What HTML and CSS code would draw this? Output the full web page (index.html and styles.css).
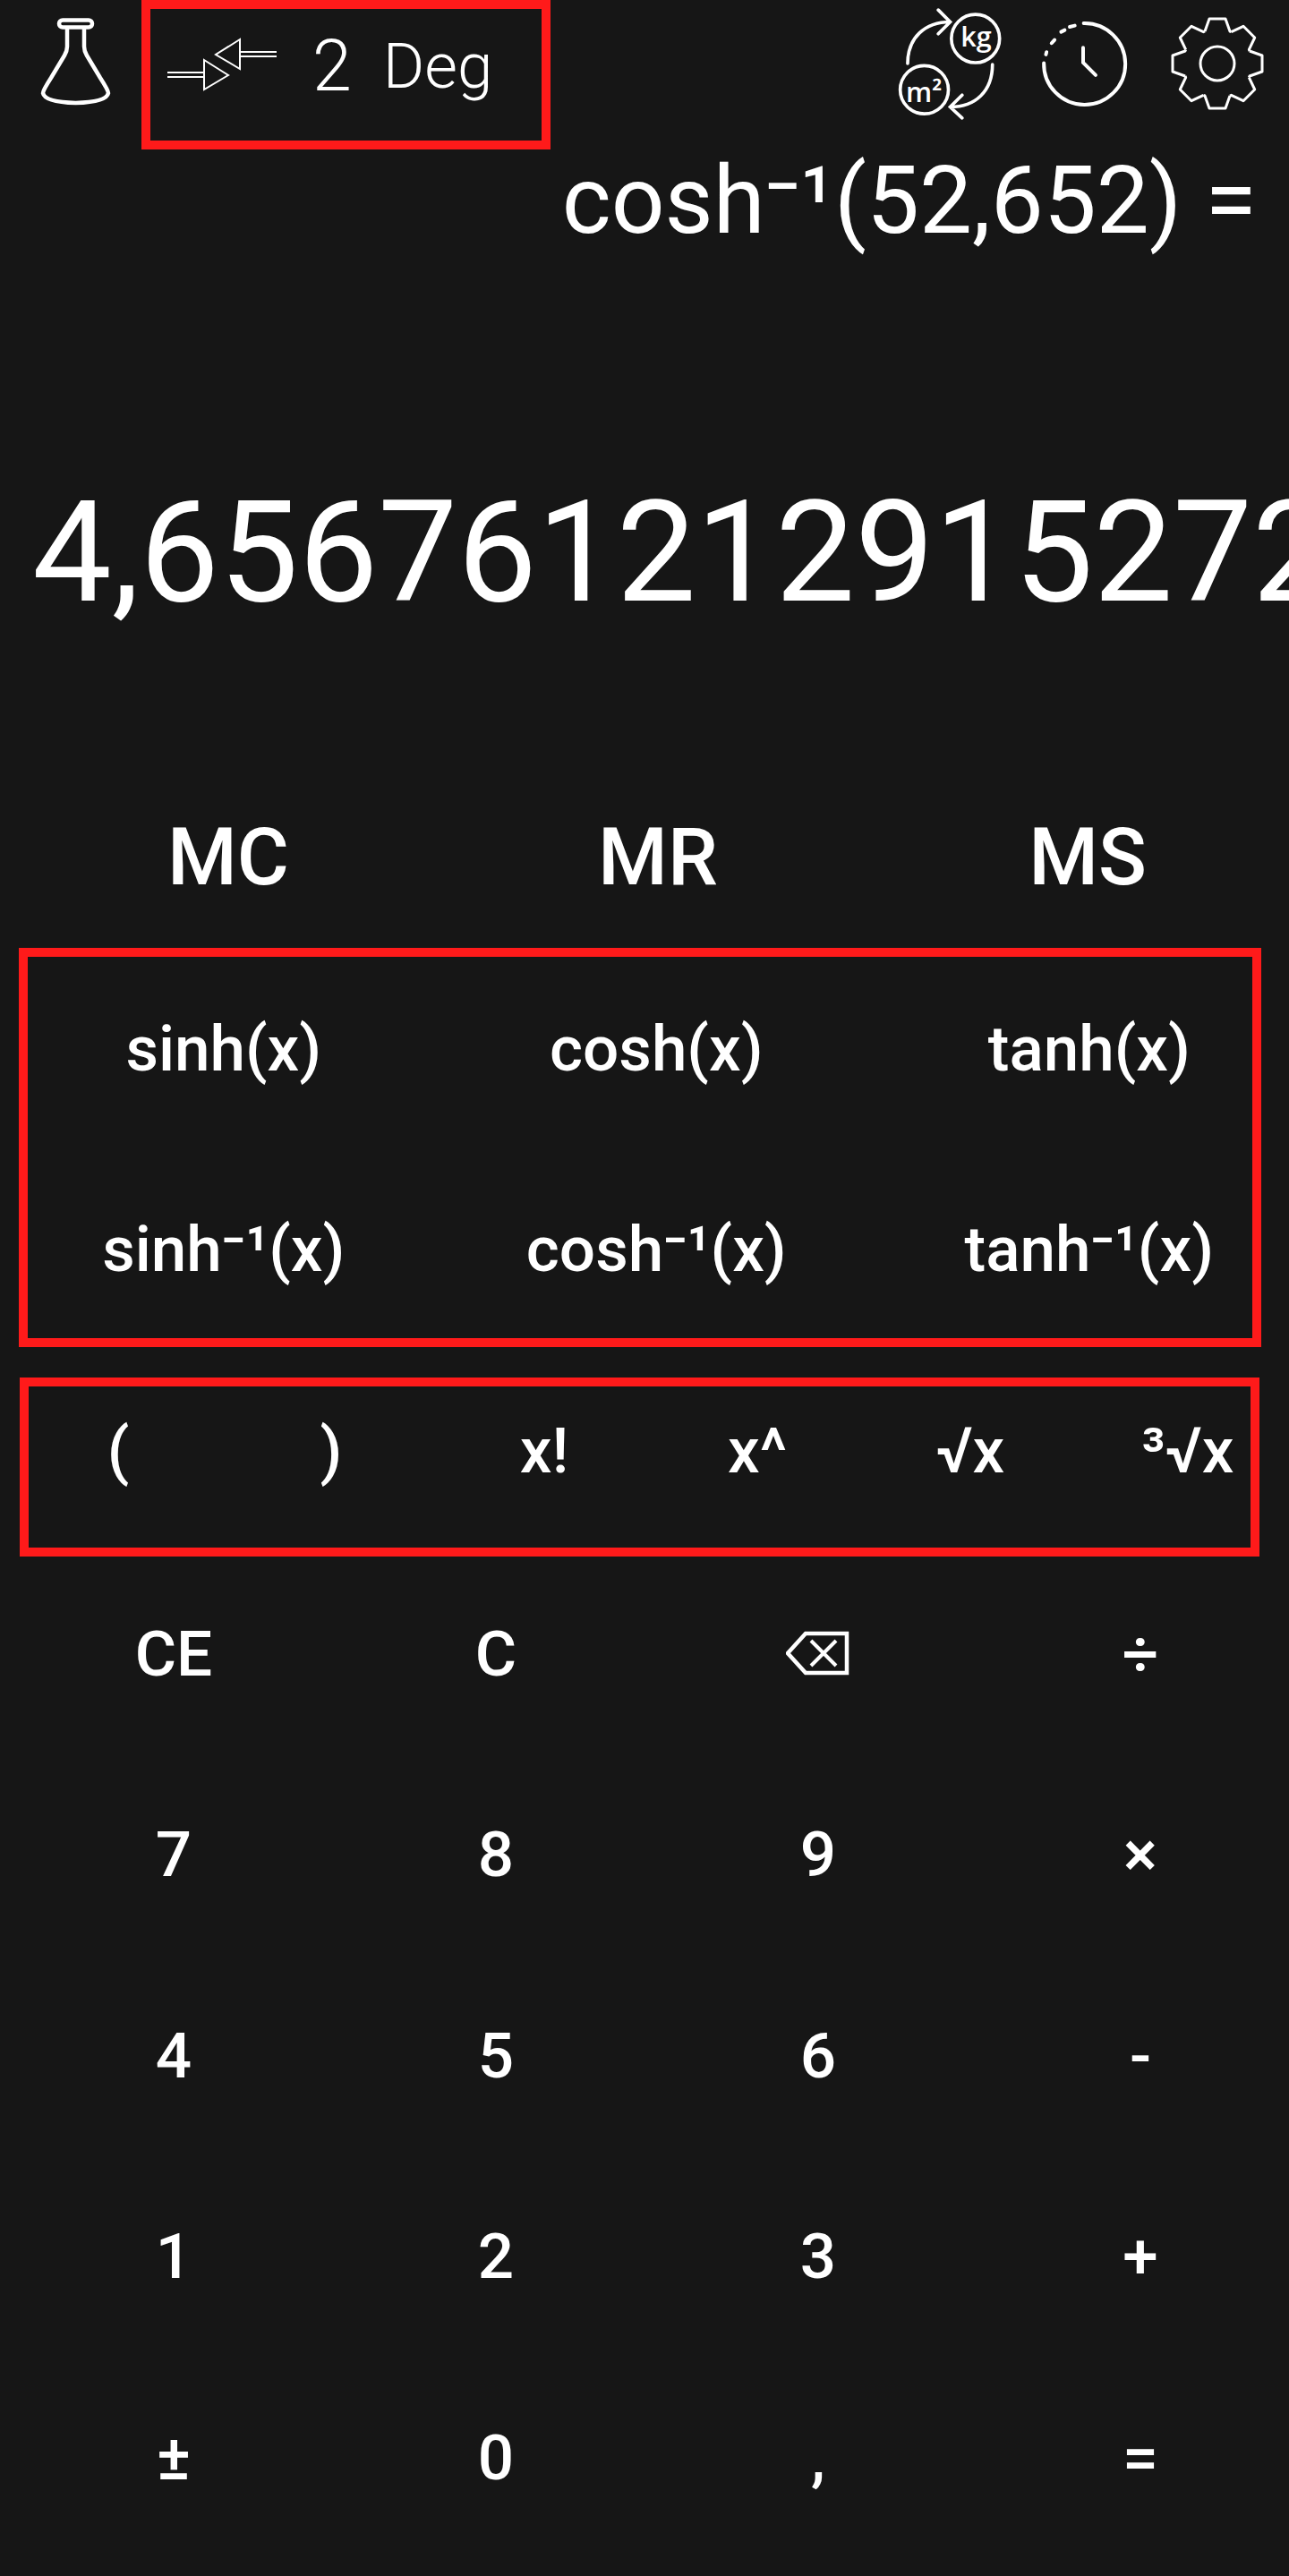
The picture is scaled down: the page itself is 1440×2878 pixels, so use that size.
FILE: index.html
```html
<!DOCTYPE html>
<html lang="en">
<head>
<meta charset="utf-8">
<title>Calculator</title>
<link rel="stylesheet" href="styles.css">
</head>
<body>
<main class="screen">
  <header class="topbar">
    <svg class="icon flask" viewBox="0 0 80 100"><rect x="21" y="3.5" width="37" height="8" rx="4"/><path d="M30 13V33Q30 38 27 43L12 68Q3 82 3 85Q5 95 39.5 96Q74 95 76 85Q76 82 67 68L52 43Q49 38 49 33V13"/></svg>
    <svg class="icon arrows" viewBox="0 0 126 60"><path d="M2 39H43M2 44H43M43 25L70 42L43 58ZM83 2L56 19L83 35ZM83 16H124M83 21H124"/></svg>
    <div class="mode"><span class="digits">2</span><span>Deg</span></div>
    <div class="tools">
      <svg class="icon convert" viewBox="120 20 370 390">
        <circle cx="390" cy="128" r="81"/><circle cx="218" cy="300" r="81"/>
        <path d="M162 212C162 125 220 72 305 72M265 32L305 72L265 112M447 215C447 305 390 358 305 358M345 318L305 358L345 395"/>
        <text x="392" y="155" class="unit" text-anchor="middle">kg</text>
        <text x="217" y="342" class="unit" text-anchor="middle">m²</text>
      </svg>
      <svg class="icon clock" viewBox="600 60 300 310">
        <path d="M752 78A137 137 0 1 1 618 212"/>
        <path d="M625 183L627 175M644 145L654 134M676 107L688 101M705 90L722 86"/>
        <path d="M750 160V210L792 252"/>
      </svg>
      <svg class="icon gear" viewBox="-165 -165 330 330">
        <defs><path id="tooth" d="M-42-108L-27-150H27L42-108L47-106"/></defs>
        <use href="#tooth"/><use href="#tooth" transform="rotate(45)"/><use href="#tooth" transform="rotate(90)"/><use href="#tooth" transform="rotate(135)"/><use href="#tooth" transform="rotate(180)"/><use href="#tooth" transform="rotate(225)"/><use href="#tooth" transform="rotate(270)"/><use href="#tooth" transform="rotate(315)"/>
        <circle r="57"/>
      </svg>
    </div>
  </header>

  <div class="expression">cosh⁻¹(52,652) =</div>
  <div class="result">4,6567612129152722</div>

  <section class="grid memory"><div>MC</div><div>MR</div><div>MS</div></section>
  <section class="grid trig">
    <div>sinh(x)</div><div>cosh(x)</div><div>tanh(x)</div>
    <div>sinh⁻¹(x)</div><div>cosh⁻¹(x)</div><div>tanh⁻¹(x)</div>
  </section>
  <section class="grid funcs"><div>(</div><div>)</div><div>x!</div><div>x^</div><div>√x</div><div class="cube">³√x</div></section>
  <section class="grid keypad">
    <div>CE</div><div>C</div>
    <div><svg class="icon backspace" viewBox="0 0 72 50"><path d="M2 25L22 3H68V47H22Z"/><path class="thin" d="M28 11L56 39M56 11L28 39"/></svg></div>
    <div>÷</div>
    <div>7</div><div>8</div><div>9</div><div>×</div>
    <div>4</div><div>5</div><div>6</div><div>-</div>
    <div>1</div><div>2</div><div>3</div><div>+</div>
    <div>±</div><div>0</div><div>,</div><div>=</div>
  </section>

  <div class="mark mark-mode"></div>
  <div class="mark mark-trig"></div>
  <div class="mark mark-funcs"></div>
</main>
</body>
</html>
```
FILE: styles.css
```css
* { box-sizing: border-box; }
html, body { margin: 0; padding: 0; background: #161616; }
.screen {
  position: relative;
  width: 1440px;
  height: 2878px;
  overflow: hidden;
  background: #161616;
  color: #fff;
  font-family: Roboto, "Noto Sans", sans-serif;
}
.icon { display: block; fill: none; stroke: #fff; flex: none; }
.topbar { display: flex; align-items: flex-start; height: 160px; padding-left: 45px; }
.flask { width: 80px; height: 100px; margin-top: 19px; stroke-width: 4.5; }
.arrows { width: 126px; height: 60px; margin: 42px 0 0 60px; stroke-width: 2; stroke-linejoin: miter; }
.mode { display: flex; align-items: center; gap: 35px; margin: 26px 0 0 38px; height: 96px; font-size: 71px; line-height: 96px; font-weight: 300; }
.digits { font-size: 79px; }
.tools { display: flex; align-items: flex-start; margin-left: auto; padding-right: 25px; }
.convert { width: 123px; height: 130px; margin-top: 7px; stroke-width: 11; stroke-linecap: round; }
.unit { fill: #fff; stroke: none; font-family: "Open Sans", sans-serif; font-weight: 600; font-size: 92px; }
.clock { width: 100px; height: 103px; margin: 20px 0 0 37px; stroke-width: 12; stroke-linecap: round; }
.gear { width: 110px; height: 110px; margin: 16px 0 0 45px; stroke-width: 9; stroke-linejoin: round; }
.expression { height: 130px; padding-right: 36px; text-align: right; font-size: 105px; line-height: 130px; white-space: nowrap; }
.result { height: 399px; margin-top: 128px; padding-left: 36px; font-size: 158px; line-height: 399px; white-space: nowrap; overflow: hidden; }
.grid { display: grid; }
.grid > div { display: flex; align-items: center; justify-content: center; white-space: nowrap; font-weight: 500; }
.memory { grid-template-columns: repeat(3, 480px); grid-auto-rows: 215px; margin: 33px 0 0 15px; font-size: 89px; }
.trig { grid-template-columns: repeat(3, 483.5px); grid-auto-rows: 224px; margin: -6px 0 0 8px; font-size: 71px; }
.funcs { grid-template-columns: repeat(6, 238px); grid-auto-rows: 224px; margin: 1px 0 0 13px; font-size: 71px; }
.grid > .cube { padding-left: 10px; }
.keypad { grid-template-columns: repeat(4, 360px); grid-auto-rows: 224.5px; margin: 3px 0 0 14px; font-size: 71px; }
.backspace { width: 72px; height: 50px; stroke-width: 4.5; }
.backspace .thin { stroke-width: 4; }
.mark { position: absolute; border: 10px solid #ff1a1a; }
.mark-mode { left: 158px; top: 0; width: 457px; height: 167px; }
.mark-trig { left: 21px; top: 1059px; width: 1388px; height: 446px; }
.mark-funcs { left: 22px; top: 1539px; width: 1385px; height: 200px; }
```
